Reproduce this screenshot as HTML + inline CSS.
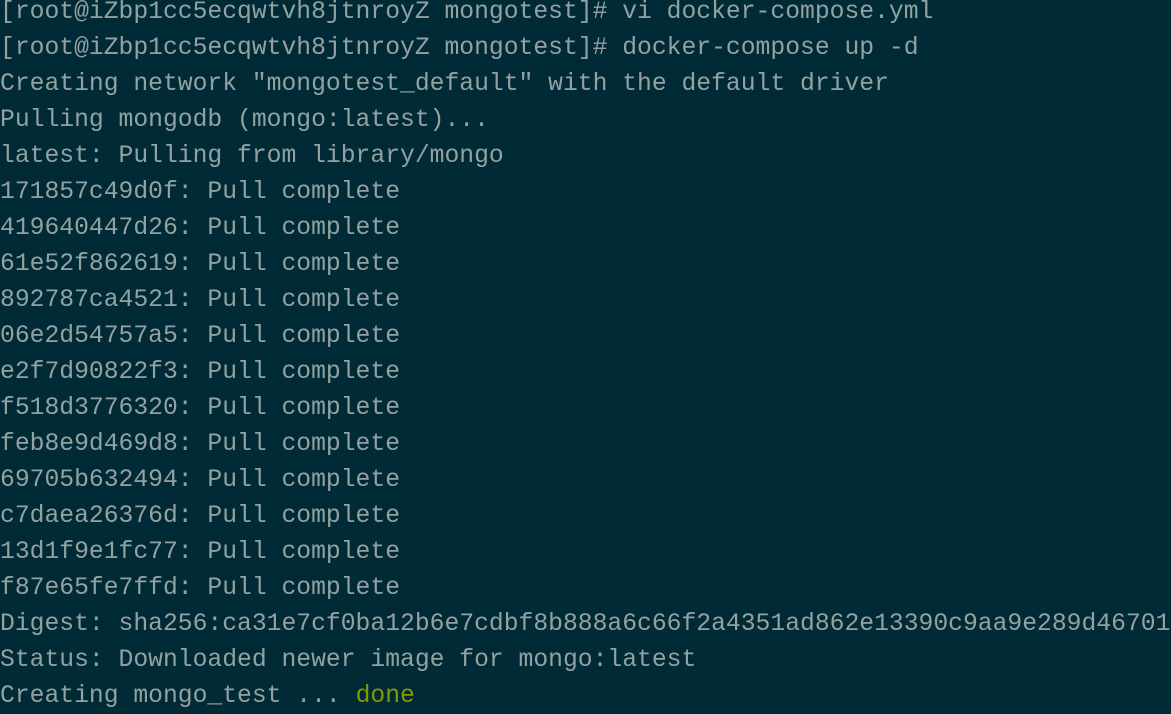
<!DOCTYPE html>
<html><head><style>
html,body{margin:0;padding:0;background:#002b36;width:1171px;height:712px;overflow:hidden}
pre{margin:0;position:absolute;left:0;top:-6px;font-family:"Liberation Mono",monospace;font-size:24.7px;line-height:36px;color:#93a1a1;white-space:pre}
.g{color:#859900}
</style></head><body>
<pre>[root@iZbp1cc5ecqwtvh8jtnroyZ mongotest]# vi docker-compose.yml
[root@iZbp1cc5ecqwtvh8jtnroyZ mongotest]# docker-compose up -d
Creating network "mongotest_default" with the default driver
Pulling mongodb (mongo:latest)...
latest: Pulling from library/mongo
171857c49d0f: Pull complete
419640447d26: Pull complete
61e52f862619: Pull complete
892787ca4521: Pull complete
06e2d54757a5: Pull complete
e2f7d90822f3: Pull complete
f518d3776320: Pull complete
feb8e9d469d8: Pull complete
69705b632494: Pull complete
c7daea26376d: Pull complete
13d1f9e1fc77: Pull complete
f87e65fe7ffd: Pull complete
Digest: sha256:ca31e7cf0ba12b6e7cdbf8b888a6c66f2a4351ad862e13390c9aa9e289d46701
Status: Downloaded newer image for mongo:latest
Creating mongo_test ... <span class="g">done</span></pre>
</body></html>
